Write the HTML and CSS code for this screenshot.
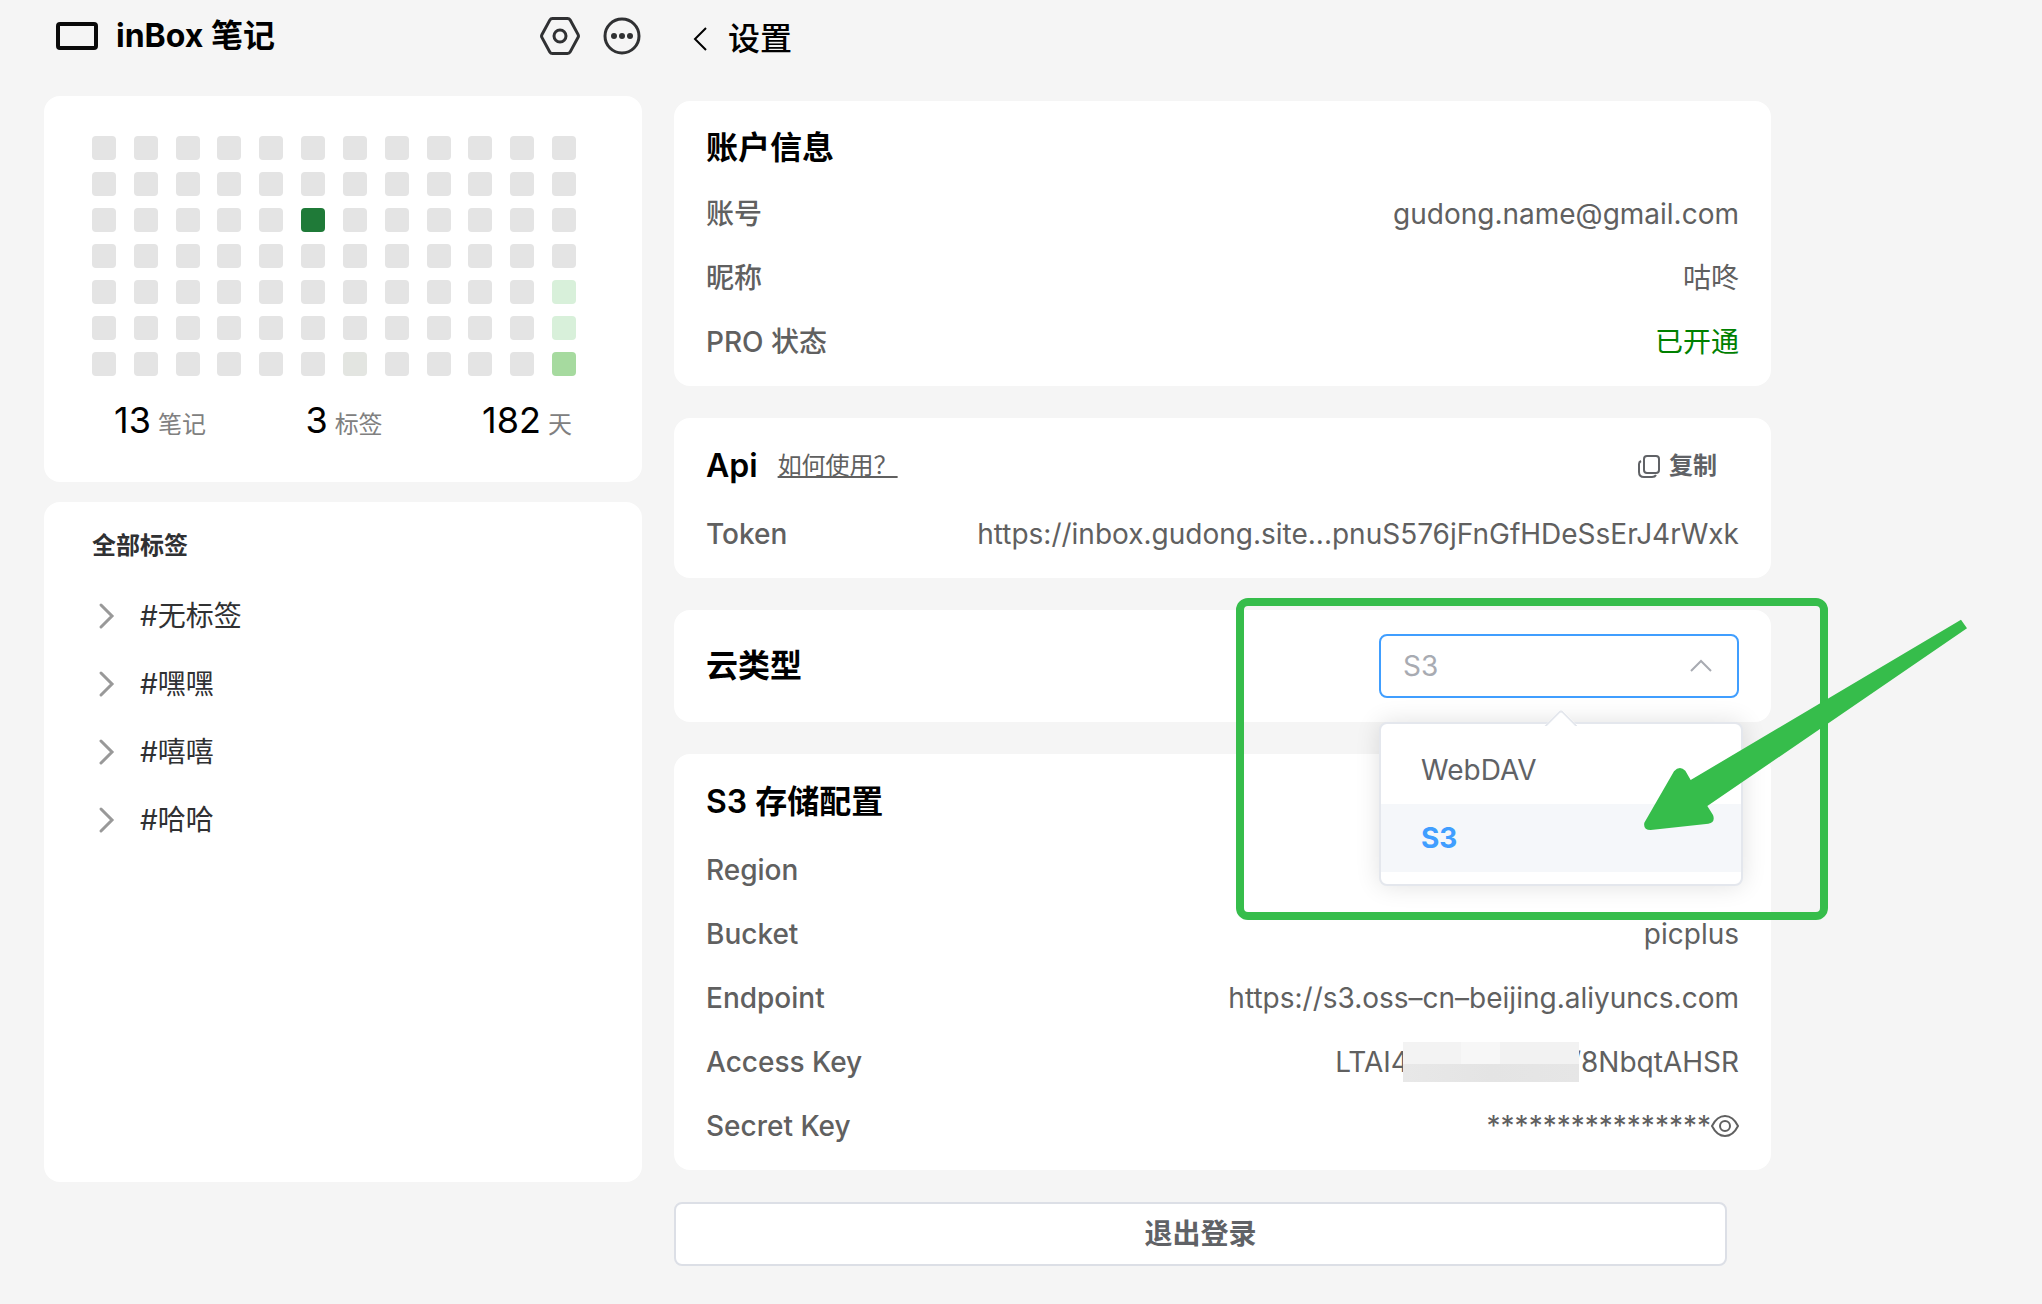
FILE: index.html
```
<!DOCTYPE html>
<html lang="zh-CN">
<head>
  <meta charset="UTF-8">
  <meta name="viewport" content="width=device-width, initial-scale=1">
  <title>inBox 笔记</title>
  <link rel="stylesheet" href="styles.css">
</head>
<body>
  <div class="layout">

    <!-- 侧边栏 -->
    <aside class="sidebar">
      <header class="sidebar-header">
        <svg class="logo" viewBox="0 0 42 28" aria-hidden="true"><rect x="2" y="2" width="38" height="24" rx="2"/></svg>
        <h1 class="brand">inBox 笔记</h1>
        <button class="icon-btn" type="button" aria-label="设置">
          <svg viewBox="0 0 40 38">
            <path d="M12.500 1.500h15q1.800 0 2.700 1.600l7.800 14.300q.9 1.600 0 3.200l-7.800 14.300q-.9 1.600-2.700 1.600h-15q-1.800 0-2.700-1.600L2 20.600q-.9-1.600 0-3.200L9.800 3.100q.9-1.600 2.700-1.600z"/>
            <circle cx="20" cy="19" r="6"/>
          </svg>
        </button>
        <button class="icon-btn" type="button" aria-label="更多">
          <svg viewBox="0 0 40 38">
            <circle cx="20" cy="19" r="17"/>
            <g class="dots"><circle cx="12" cy="19" r="3"/><circle cx="20" cy="19" r="3"/><circle cx="28" cy="19" r="3"/></g>
          </svg>
        </button>
      </header>

      <section class="card overview">
        <div class="heatmap" id="heatmap"></div>
        <div class="stats">
          <div class="stat"><span class="stat-num">13</span><span class="stat-unit">笔记</span></div>
          <div class="stat"><span class="stat-num">3</span><span class="stat-unit">标签</span></div>
          <div class="stat"><span class="stat-num">182</span><span class="stat-unit">天</span></div>
        </div>
      </section>

      <nav class="card tags">
        <h2 class="tags-title">全部标签</h2>
        <ul class="tag-list">
          <li><a class="tag" href="#"><svg viewBox="0 0 28 28"><path d="M9 3l11 11L9 25"/></svg>#无标签</a></li>
          <li><a class="tag" href="#"><svg viewBox="0 0 28 28"><path d="M9 3l11 11L9 25"/></svg>#嘿嘿</a></li>
          <li><a class="tag" href="#"><svg viewBox="0 0 28 28"><path d="M9 3l11 11L9 25"/></svg>#嘻嘻</a></li>
          <li><a class="tag" href="#"><svg viewBox="0 0 28 28"><path d="M9 3l11 11L9 25"/></svg>#哈哈</a></li>
        </ul>
      </nav>
    </aside>

    <!-- 设置 -->
    <main class="content">
      <header class="content-header">
        <button class="back" type="button" aria-label="返回">
          <svg viewBox="0 0 28 28"><path d="M20 3L9 14l11 11"/></svg>
        </button>
        <h2 class="page-title">设置</h2>
      </header>

      <section class="card settings settings-account">
        <h3 class="settings-title">账户信息</h3>
        <dl class="rows">
          <div class="row"><dt>账号</dt><dd>gudong.name@gmail.com</dd></div>
          <div class="row"><dt>昵称</dt><dd>咕咚</dd></div>
          <div class="row"><dt>PRO 状态</dt><dd class="active">已开通</dd></div>
        </dl>
      </section>

      <section class="card settings">
        <div class="settings-title">
          <h3>Api</h3>
          <a class="help" href="#">如何使用？</a>
          <button class="copy" type="button">
            <svg viewBox="0 0 24 24"><rect x="7" y="2" width="15" height="17" rx="3"/><path d="M4 7Q2 8 2 10v8q0 5 5 5h8q3 0 4-2"/></svg>
            复制
          </button>
        </div>
        <dl class="rows">
          <div class="row"><dt>Token</dt><dd>https://inbox.gudong.site...pnuS576jFnGfHDeSsErJ4rWxk</dd></div>
        </dl>
      </section>

      <section class="card cloud">
        <label class="cloud-title" for="cloud-type">云类型</label>
        <div class="select">
          <select id="cloud-type">
            <option>WebDAV</option>
            <option selected>S3</option>
          </select>
          <svg class="select-arrow" viewBox="0 0 28 28"><path d="M4 19l10-10 10 10"/></svg>
          <div class="dropdown">
            <button class="option" type="button">WebDAV</button>
            <button class="option selected" type="button">S3</button>
          </div>
        </div>
        <!-- 标注 -->
        <div class="mark-box"></div>
        <svg class="mark-arrow" viewBox="129 54 975 639" aria-hidden="true">
          <path d="M1083 59L1101 85 322 618 339 645Q347 667 325 671L152 690Q129 690 133 668L222 514Q239 495 256 512L272 540Z"/>
        </svg>
      </section>

      <section class="card settings">
        <h3 class="settings-title">S3 存储配置</h3>
        <dl class="rows">
          <div class="row"><dt>Region</dt><dd></dd></div>
          <div class="row"><dt>Bucket</dt><dd>picplus</dd></div>
          <div class="row"><dt>Endpoint</dt><dd>https://s3.oss–cn–beijing.aliyuncs.com</dd></div>
          <div class="row"><dt>Access Key</dt><dd>LTAI4<span class="mask"></span>/8NbqtAHSR</dd></div>
          <div class="row">
            <dt>Secret Key</dt>
            <dd>****************<button class="eye" type="button" aria-label="显示"><svg viewBox="0 0 28 28"><path d="M1 14Q6 4 14 4t13 10q-5 10-13 10T1 14z"/><circle cx="14" cy="14" r="5"/></svg></button></dd>
          </div>
        </dl>
      </section>

      <button class="logout" type="button">退出登录</button>
    </main>
  </div>

  <script>
    const columnas = 12;
    const filas = 7;
    // fila-columna: nivel
    const niveles = { '2-5': 4, '4-11': 2, '5-11': 2, '6-6': 1, '6-11': 3 };
    const heatmap = document.getElementById('heatmap');

    for (let f = 0; f < filas; f++) {
      for (let c = 0; c < columnas; c++) {
        const cell = document.createElement('span');
        const nivel = niveles[f + '-' + c];
        cell.className = nivel ? 'cell level-' + nivel : 'cell';
        heatmap.appendChild(cell);
      }
    }
  </script>
</body>
</html>
```
FILE: styles.css
```
* {
  box-sizing: border-box;
}

body {
  margin: 0;
  background: #f5f5f5;
  color: #000;
  font-family: Inter, "Noto Sans CJK SC", sans-serif;
  font-size: 28px;
  line-height: 40px;
}

h1, h2, h3, ul, dl, dd {
  margin: 0;
  padding: 0;
}

button, select {
  font: inherit;
  color: inherit;
  cursor: pointer;
}

svg {
  display: block;
  fill: none;
}

.layout {
  display: flex;
  gap: 32px;
  padding: 0 44px;
}

.card {
  background: #fff;
  border-radius: 16px;
}

/* sidebar */
.sidebar {
  display: flex;
  flex-direction: column;
  flex: 0 0 598px;
  height: calc(100vh - 122px);
}

.sidebar-header {
  display: flex;
  align-items: center;
  height: 72px;
  margin-bottom: 24px;
  padding-left: 12px;
}

.logo {
  width: 42px;
  height: 28px;
  margin-right: 18px;
  stroke: #0a0a0a;
  stroke-width: 4;
}

.brand {
  flex: 1;
  font-size: 32px;
  font-weight: 700;
}

.icon-btn {
  margin-left: 22px;
  padding: 0;
  border: none;
  background: none;
}

.icon-btn svg {
  width: 40px;
  height: 38px;
  stroke: #303133;
  stroke-width: 3;
}

.icon-btn .dots {
  fill: #303133;
  stroke: none;
}

.overview {
  height: 386px;
  margin-bottom: 20px;
  padding: 40px 48px;
}

.heatmap {
  display: grid;
  grid-template-columns: repeat(12, 1fr);
  row-gap: 12px;
}

.cell {
  width: 24px;
  height: 24px;
  border-radius: 4px;
  background: #e4e4e4;
}

.level-1 {
  background: #e3e5e1;
}

.level-2 {
  background: #d8f0da;
}

.level-3 {
  background: #a6da9f;
}

.level-4 {
  background: #1f7a38;
}

.stats {
  display: flex;
  justify-content: space-between;
  margin-top: 24px;
  padding: 0 22px;
}

.stat {
  display: flex;
  align-items: baseline;
  gap: 7px;
}

.stat-num {
  font-size: 36px;
}

.stat-unit {
  font-size: 24px;
  color: #808080;
}

.tags {
  flex: 1;
  padding: 24px 48px;
}

.tags-title {
  margin-bottom: 16px;
  font-size: 24px;
  color: #303133;
}

.tag-list {
  list-style: none;
}

.tag {
  display: flex;
  align-items: center;
  gap: 20px;
  height: 68px;
  color: #303133;
  text-decoration: none;
}

.tag svg {
  width: 28px;
  height: 28px;
  stroke: #999;
  stroke-width: 3;
  stroke-linecap: round;
}

/* settings */
.content {
  flex: 1;
  max-width: 1097px;
}

.content-header {
  display: flex;
  align-items: center;
  gap: 14px;
  height: 77px;
  margin-bottom: 24px;
  padding-left: 12px;
}

.back {
  padding: 0;
  border: none;
  background: none;
}

.back svg {
  width: 28px;
  height: 28px;
  stroke: #000;
  stroke-width: 2;
}

.page-title {
  font-size: 32px;
  font-weight: 500;
}

.settings {
  margin-bottom: 32px;
  padding: 12px 32px;
}

.settings-title {
  display: flex;
  align-items: center;
  height: 72px;
  font-size: 32px;
  font-weight: 600;
}

.settings-account .settings-title {
  height: 69px;
}

.settings-title h3 {
  font: inherit;
}

.help {
  margin-left: 20px;
  font-size: 24px;
  font-weight: 400;
  color: #606060;
}

.copy {
  display: flex;
  align-items: center;
  gap: 8px;
  margin-left: auto;
  padding: 0 22px;
  border: none;
  background: none;
  font-size: 24px;
  font-weight: 600;
  color: #606266;
}

.copy svg {
  width: 24px;
  height: 24px;
  stroke: #606266;
  stroke-width: 2;
}

.row {
  display: flex;
  align-items: center;
  justify-content: space-between;
  height: 64px;
  color: #606060;
}

.row dt {
  font-weight: 500;
}

.row dd {
  display: flex;
  align-items: center;
}

.row .active {
  color: #008000;
}

.mask {
  z-index: 1;
  width: 176px;
  height: 40px;
  margin: 0 -8px 0 -6px;
  background:
    linear-gradient(#f3f3f3, #f3f3f3) 0 0 / 58px 22px no-repeat,
    linear-gradient(#f7f7f7, #f7f7f7) 58px 0 / 39px 22px no-repeat,
    linear-gradient(#f2f2f2, #f2f2f2) 97px 0 / 79px 22px no-repeat,
    linear-gradient(90deg, #e8e8e8, #e4e4e4 50%, #e6e6e6);
}

.eye {
  padding: 0;
  border: none;
  background: none;
}

.eye svg {
  width: 28px;
  height: 28px;
  stroke: #606060;
  stroke-width: 2;
}

/* cloud type */
.cloud {
  position: relative;
  display: flex;
  align-items: center;
  justify-content: space-between;
  margin-bottom: 32px;
  padding: 24px 32px;
}

.cloud-title {
  font-size: 32px;
  font-weight: 600;
}

.select {
  position: relative;
  width: 360px;
}

.select select {
  display: block;
  width: 100%;
  height: 64px;
  padding: 0 22px;
  border: 2px solid #409eff;
  border-radius: 8px;
  outline: none;
  appearance: none;
  background: #fff;
  color: #a8abb2;
}

.select-arrow {
  position: absolute;
  top: 18px;
  right: 24px;
  width: 28px;
  height: 28px;
  stroke: #a8abb2;
  stroke-width: 2;
  pointer-events: none;
}

.dropdown {
  position: absolute;
  z-index: 2;
  top: 88px;
  left: 0;
  width: 364px;
  padding: 12px 0;
  border: 2px solid #e4e7ed;
  border-radius: 8px;
  background: #fff;
  box-shadow: 0 0 24px rgba(0, 0, 0, 0.12);
}

.dropdown::before {
  content: "";
  position: absolute;
  top: -10px;
  left: 168px;
  width: 20px;
  height: 20px;
  border: 2px solid #e4e7ed;
  border-right-color: transparent;
  border-bottom-color: transparent;
  border-top-left-radius: 4px;
  background: #fff;
  transform: rotate(45deg);
}

.option {
  position: relative;
  display: block;
  width: 100%;
  height: 68px;
  padding: 0 40px;
  border: none;
  background: #fff;
  color: #606266;
  text-align: left;
}

.option.selected {
  background: #f5f7fa;
  color: #409eff;
  font-weight: 700;
}

.mark-box {
  position: absolute;
  z-index: 3;
  top: -12px;
  right: -57px;
  width: 592px;
  height: 322px;
  border: 8px solid #36bd4b;
  border-radius: 12px;
  pointer-events: none;
}

.mark-arrow {
  position: absolute;
  z-index: 3;
  top: 8px;
  right: -197px;
  width: 325px;
  height: 213px;
  fill: #36bd4b;
  pointer-events: none;
}

.logout {
  display: block;
  width: calc(100% - 44px);
  height: 64px;
  border: 2px solid #dcdfe6;
  border-radius: 8px;
  background: #fff;
  color: #606266;
  font-weight: 600;
}
```
